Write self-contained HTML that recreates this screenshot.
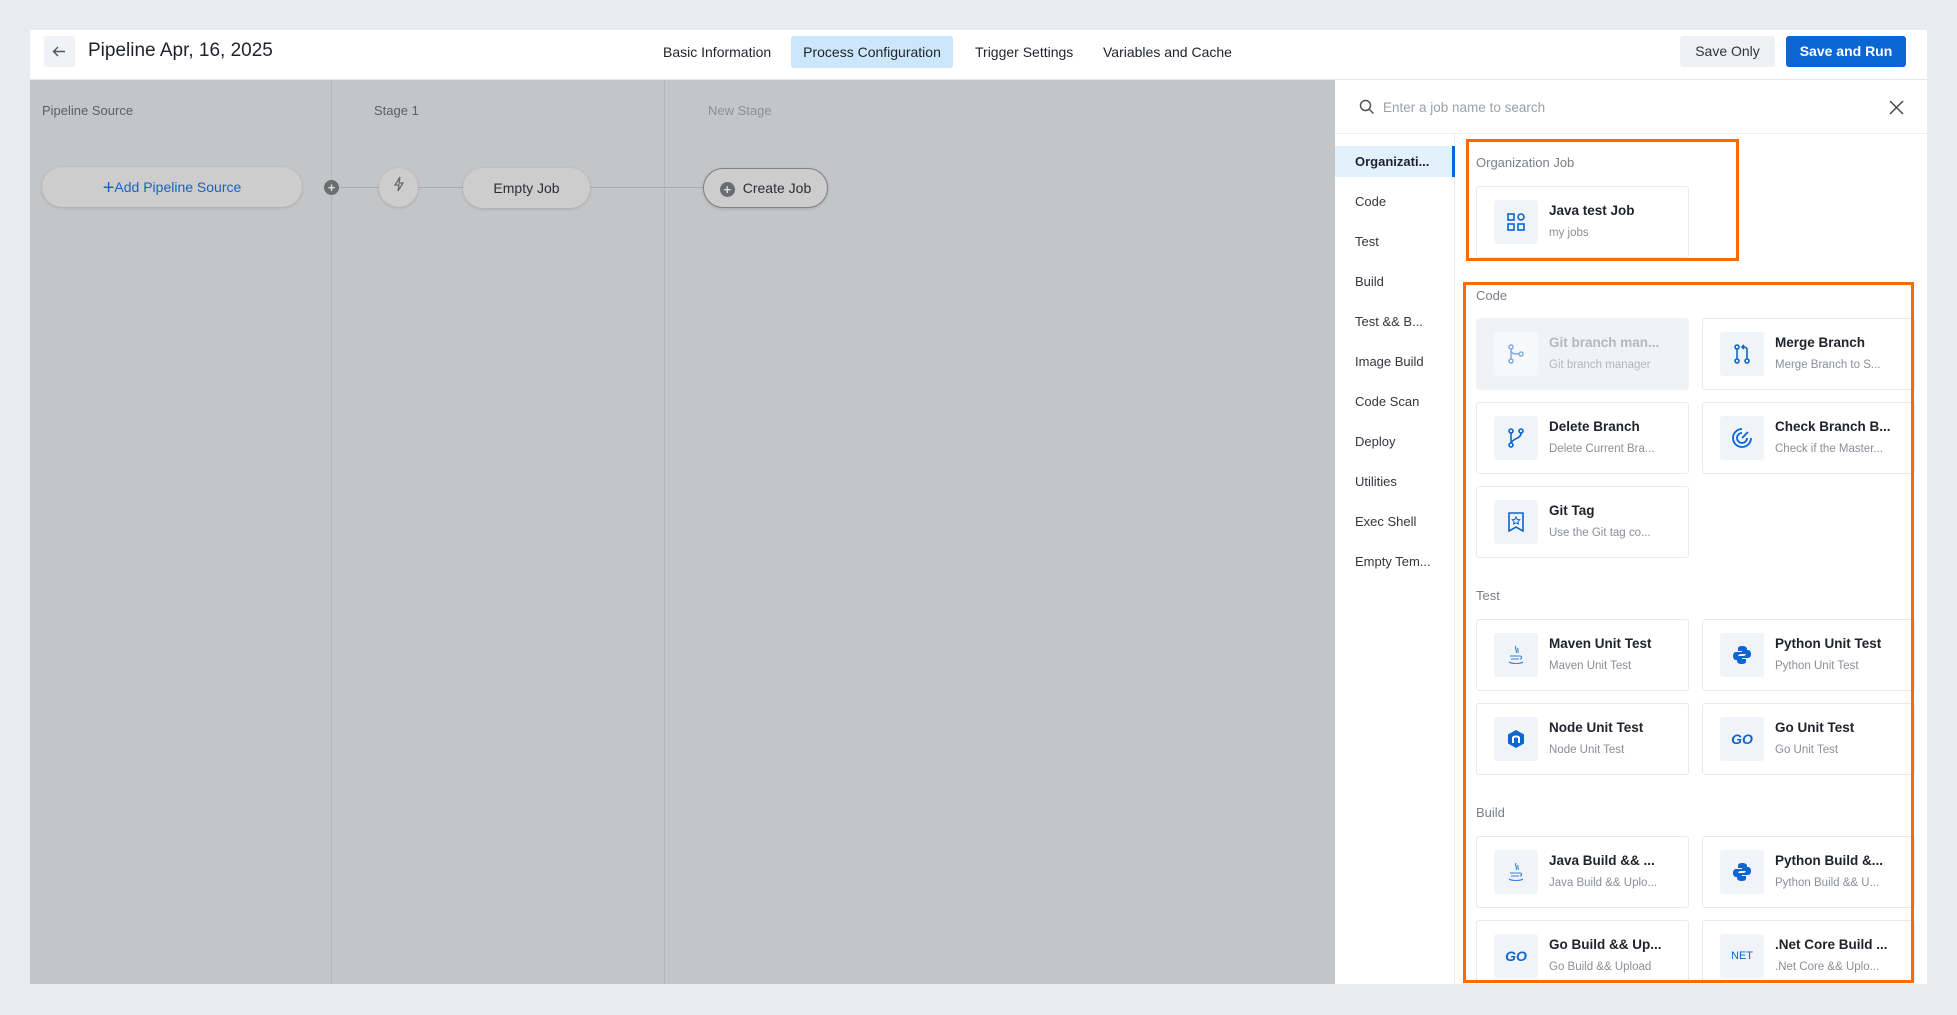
<!DOCTYPE html>
<html><head><meta charset="utf-8"><style>
*{box-sizing:border-box;margin:0;padding:0}
body{width:1957px;height:1015px;background:#e8ecef;font-family:"Liberation Sans",sans-serif;position:relative;overflow:hidden;color:#1f2329}
.abs{position:absolute}
.main{left:30px;top:30px;width:1897px;height:954px;background:#fff;overflow:hidden}
.hdr{left:0;top:0;width:1897px;height:50px;border-bottom:1px solid #e5e7eb;background:#fff}
.tab{position:absolute;top:6px;height:32px;line-height:32px;font-size:14px;color:#1f2329;padding:0 11px;border-radius:3px}
.btn{position:absolute;top:6px;height:31px;line-height:31px;font-size:14px;text-align:center;border-radius:3px}
.canvas{left:0;top:50px;width:1305px;height:904px;background:#c4c5c7}
.vl{position:absolute;top:0;width:1px;height:904px;background:#b3b5b8}
.slab{position:absolute;top:23px;font-size:13px;color:#5c6066}
.pill{position:absolute;height:40px;border-radius:20px;background:#cdcdce;box-shadow:0 1px 3px rgba(0,0,0,.15);font-size:14px;text-align:center;line-height:40px;color:#2b2f33}
.hl{position:absolute;height:1px;background:#a9abae;top:107px}
.panel{left:1305px;top:50px;width:592px;height:904px;background:#fff}
.nav{position:absolute;left:0;top:54px;width:120px;height:850px;border-right:1px solid #eceef1}
.ni{position:absolute;left:0;width:120px;height:31px;line-height:31px;padding-left:20px;font-size:13px;color:#33373c}
.sec{position:absolute;left:141px;font-size:13px;color:#7a7f86}
.card{position:absolute;width:213px;height:72px;border:1px solid #e7e9ec;border-radius:3px;background:#fff}
.card .ic{position:absolute;left:17px;top:13px;width:44px;height:44px;background:#f0f3f7;border-radius:3px;display:flex;align-items:center;justify-content:center}
.card .t{position:absolute;left:72px;top:16px;font-size:13.5px;font-weight:bold;color:#1f2329;white-space:nowrap}
.card .s{position:absolute;left:72px;top:40px;font-size:11.5px;color:#8a8f96;white-space:nowrap}
.card.dis{background:#f0f3f6;border-color:#f0f3f6}
.card.dis .ic{background:#f6f8fa}
.card.dis .t{color:#b3b8be}.card.dis .s{color:#b3b8be}
.ob{position:absolute;border:3px solid #ff6a00}
</style></head><body>
<div class="abs main">
 <div class="abs hdr">
  <div class="abs" style="left:14px;top:6px;width:31px;height:31px;background:#f0f2f5;border-radius:3px">
   <svg width="31" height="31" viewBox="0 0 31 31"><path d="M21 15.5H10M14 11l-4.5 4.5L14 20" fill="none" stroke="#555" stroke-width="1.4"/></svg>
  </div>
  <div class="abs" style="left:58px;top:10px;font-size:19px;color:#1f2329">Pipeline Apr, 16, 2025</div>
  <div class="tab" style="left:622px">Basic Information</div>
  <div class="tab" style="left:761px;background:#cce7fb;width:162px;text-align:center;padding:0">Process Configuration</div>
  <div class="tab" style="left:934px">Trigger Settings</div>
  <div class="tab" style="left:1062px">Variables and Cache</div>
  <div class="btn" style="left:1650px;width:95px;background:#eef1f4;color:#333">Save Only</div>
  <div class="btn" style="left:1756px;width:120px;background:#0a66d2;color:#fff;font-weight:bold">Save and Run</div>
 </div>
 <div class="abs canvas">
  <div class="vl" style="left:301px"></div><div class="vl" style="left:634px"></div>
  <div class="slab" style="left:12px">Pipeline Source</div>
  <div class="slab" style="left:344px">Stage 1</div>
  <div class="slab" style="left:678px;color:#8c9096">New Stage</div>
  <div class="hl" style="left:301px;width:400px"></div>
  <div class="pill" style="left:12px;top:87px;width:260px;color:#1565c0"><span style="font-size:20px;vertical-align:-2px">+</span>Add Pipeline Source</div>
  <div class="abs" style="left:294px;top:100px;width:15px;height:15px;border-radius:50%;background:#6a6d71;color:#ddd;font-size:13px;line-height:15px;text-align:center;font-weight:bold">+</div>
  <div class="pill" style="left:349px;top:88px;width:39px;height:39px;border-radius:50%;line-height:39px"><svg width="14" height="16" viewBox="0 0 14 16"><path d="M8 1L3 9h4l-1 6 5-8H7z" fill="none" stroke="#666" stroke-width="1.2"/></svg></div>
  <div class="pill" style="left:433px;top:88px;width:127px">Empty Job</div>
  <div class="pill" style="left:673px;top:88px;width:125px;border:1px solid #7d8084;line-height:38px"><span style="display:inline-block;width:15px;height:15px;border-radius:50%;background:#6a6d71;color:#ddd;font-size:13px;line-height:15px;font-weight:bold;vertical-align:-1px;margin-right:8px">+</span>Create Job</div>
 </div>
 <div class="abs panel">
  <div class="abs" style="left:0;top:0;width:592px;height:54px;border-bottom:1px solid #eceef1">
   <svg class="abs" style="left:24px;top:19px" width="16" height="16" viewBox="0 0 16 16"><circle cx="6.5" cy="6.5" r="5" fill="none" stroke="#555" stroke-width="1.5"/><path d="M10 10l4.5 4.5" stroke="#555" stroke-width="1.5"/></svg>
   <div class="abs" style="left:48px;top:20px;font-size:13.5px;color:#9aa0a6">Enter a job name to search</div>
   <svg class="abs" style="left:586px;top:20px;margin-left:-32px" width="15" height="15" viewBox="0 0 15 15"><path d="M1 1l13 13M14 1L1 14" stroke="#444" stroke-width="1.4"/></svg>
  </div>
  <div class="nav">
   <div class="ni" style="top:12px;background:#e3f1fc;border-right:3px solid #0a66d2;font-weight:bold;color:#1f2329">Organizati...</div>
   <div class="ni" style="top:52px">Code</div>
   <div class="ni" style="top:92px">Test</div>
   <div class="ni" style="top:132px">Build</div>
   <div class="ni" style="top:172px">Test &amp;&amp; B...</div>
   <div class="ni" style="top:212px">Image Build</div>
   <div class="ni" style="top:252px">Code Scan</div>
   <div class="ni" style="top:292px">Deploy</div>
   <div class="ni" style="top:332px">Utilities</div>
   <div class="ni" style="top:372px">Exec Shell</div>
   <div class="ni" style="top:412px">Empty Tem...</div>
  </div>
  <div class="sec" style="top:75px">Organization Job</div>
  <div class="card" style="left:141px;top:106px"><div class="ic"><svg width="18" height="18" viewBox="0 0 18 18" fill="none" stroke="#0a66d2" stroke-width="1.6"><rect x="1" y="1" width="6" height="6"/><rect x="11" y="1" width="6" height="6" rx="3"/><rect x="1" y="11" width="6" height="6"/><rect x="11" y="11" width="6" height="6"/></svg></div><div class="t">Java test Job</div><div class="s">my jobs</div></div>

  <div class="sec" style="top:208px">Code</div>
  <div class="card dis" style="left:141px;top:238px"><div class="ic"><svg width="18" height="20" viewBox="0 0 18 20" fill="none" stroke="#7eaee6" stroke-width="1.5"><circle cx="4" cy="3" r="2"/><circle cx="4" cy="17" r="2"/><circle cx="14" cy="10" r="2"/><path d="M4 5v10M4 6c0 4 4 4 8 4"/></svg></div><div class="t">Git branch man...</div><div class="s">Git branch manager</div></div>
  <div class="card" style="left:367px;top:238px"><div class="ic"><svg width="18" height="22" viewBox="0 0 18 22" fill="none" stroke="#0a66d2" stroke-width="1.6"><circle cx="4" cy="4" r="2"/><circle cx="4" cy="18" r="2"/><circle cx="14" cy="18" r="2"/><path d="M4 6v10M14 16V7c0-2-1-3-3-3H9M11 2L9 4l2 2"/></svg></div><div class="t">Merge Branch</div><div class="s">Merge Branch to S...</div></div>
  <div class="card" style="left:141px;top:322px"><div class="ic"><svg width="18" height="20" viewBox="0 0 18 20" fill="none" stroke="#0a66d2" stroke-width="1.6"><circle cx="4" cy="3" r="2"/><circle cx="4" cy="17" r="2"/><circle cx="14" cy="3" r="2"/><path d="M4 5v10M14 5c0 6-8 5-10 10"/></svg></div><div class="t">Delete Branch</div><div class="s">Delete Current Bra...</div></div>
  <div class="card" style="left:367px;top:322px"><div class="ic"><svg width="22" height="22" viewBox="0 0 22 22" fill="none" stroke="#0a66d2" stroke-width="1.8"><path d="M11 2a9 9 0 1 0 9 9"/><path d="M11 6a5 5 0 1 0 5 5"/><path d="M11 11l6-6"/></svg></div><div class="t">Check Branch B...</div><div class="s">Check if the Master...</div></div>
  <div class="card" style="left:141px;top:406px"><div class="ic"><svg width="16" height="20" viewBox="0 0 16 20" fill="none" stroke="#0a66d2" stroke-width="1.6"><path d="M1 1h14v18l-7-4-7 4z"/><path d="M8 5l1.2 2.4 2.6.3-1.9 1.8.5 2.6L8 10.8l-2.4 1.3.5-2.6-1.9-1.8 2.6-.3z" stroke-width="1"/></svg></div><div class="t">Git Tag</div><div class="s">Use the Git tag co...</div></div>

  <div class="sec" style="top:508px">Test</div>
  <div class="card" style="left:141px;top:539px"><div class="ic"><svg width="18" height="22" viewBox="0 0 18 22" fill="none" stroke="#3b82d6" stroke-width="1.1"><path d="M9 2c-2 3 2 4 0 7M11 4c-1 2 1 3 0 5"/><path d="M3 12h10M4 15h8M2 18c3 2 11 2 14 0M13 12c2 0 2 3 0 3"/></svg></div><div class="t">Maven Unit Test</div><div class="s">Maven Unit Test</div></div>
  <div class="card" style="left:367px;top:539px"><div class="ic"><svg width="20" height="20" viewBox="0 0 20 20" fill="#0a66d2"><path d="M10 1c-4 0-4 2-4 3v2h4v1H4c-2 0-3 2-3 4s1 4 3 4h2v-3c0-2 1-3 3-3h4c2 0 2-1 2-2V4c0-2-2-3-5-3z"/><path d="M10 19c4 0 4-2 4-3v-2h-4v-1h6c2 0 3-2 3-4s-1-4-3-4h-2v3c0 2-1 3-3 3H7c-2 0-2 1-2 2v3c0 2 2 3 5 3z"/></svg></div><div class="t">Python Unit Test</div><div class="s">Python Unit Test</div></div>
  <div class="card" style="left:141px;top:623px"><div class="ic"><svg width="18" height="20" viewBox="0 0 18 20"><path d="M9 1l8 4.5v9L9 19l-8-4.5v-9z" fill="#0a66d2"/><path d="M6 14V9c0-2 6-2 6 0v5" fill="none" stroke="#fff" stroke-width="2"/></svg></div><div class="t">Node Unit Test</div><div class="s">Node Unit Test</div></div>
  <div class="card" style="left:367px;top:623px"><div class="ic"><span style="color:#0a66d2;font-weight:bold;font-style:italic;font-size:14px">GO</span></div><div class="t">Go Unit Test</div><div class="s">Go Unit Test</div></div>

  <div class="sec" style="top:725px">Build</div>
  <div class="card" style="left:141px;top:756px"><div class="ic"><svg width="18" height="22" viewBox="0 0 18 22" fill="none" stroke="#3b82d6" stroke-width="1.1"><path d="M9 2c-2 3 2 4 0 7M11 4c-1 2 1 3 0 5"/><path d="M3 12h10M4 15h8M2 18c3 2 11 2 14 0M13 12c2 0 2 3 0 3"/></svg></div><div class="t">Java Build &amp;&amp; ...</div><div class="s">Java Build &amp;&amp; Uplo...</div></div>
  <div class="card" style="left:367px;top:756px"><div class="ic"><svg width="20" height="20" viewBox="0 0 20 20" fill="#0a66d2"><path d="M10 1c-4 0-4 2-4 3v2h4v1H4c-2 0-3 2-3 4s1 4 3 4h2v-3c0-2 1-3 3-3h4c2 0 2-1 2-2V4c0-2-2-3-5-3z"/><path d="M10 19c4 0 4-2 4-3v-2h-4v-1h6c2 0 3-2 3-4s-1-4-3-4h-2v3c0 2-1 3-3 3H7c-2 0-2 1-2 2v3c0 2 2 3 5 3z"/></svg></div><div class="t">Python Build &amp;...</div><div class="s">Python Build &amp;&amp; U...</div></div>
  <div class="card" style="left:141px;top:840px"><div class="ic"><span style="color:#0a66d2;font-weight:bold;font-style:italic;font-size:14px">GO</span></div><div class="t">Go Build &amp;&amp; Up...</div><div class="s">Go Build &amp;&amp; Upload</div></div>
  <div class="card" style="left:367px;top:840px"><div class="ic"><span style="color:#0a66d2;font-size:11px">NET</span></div><div class="t">.Net Core Build ...</div><div class="s">.Net Core &amp;&amp; Uplo...</div></div>
 </div>
</div>
<div class="ob" style="left:1466px;top:139px;width:273px;height:122px"></div>
<div class="ob" style="left:1463px;top:282px;width:451px;height:701px"></div>
</body></html>
